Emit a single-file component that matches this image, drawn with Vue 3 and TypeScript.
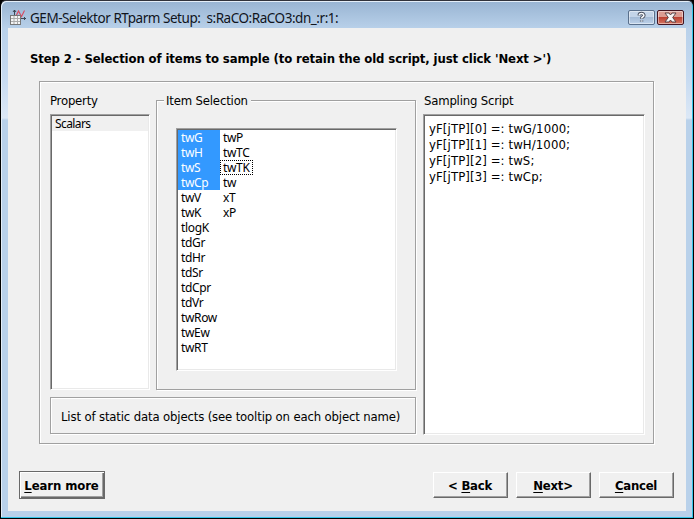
<script setup lang="ts">
import { computed, ref } from 'vue'

interface Item {
  name: string
  selected?: boolean
  focused?: boolean
}

const rowsPerColumn = 15
const properties = ref<string[]>(['Scalars'])
const items = ref<Item[]>([
  { name: 'twG', selected: true },
  { name: 'twH', selected: true },
  { name: 'twS', selected: true },
  { name: 'twCp', selected: true },
  { name: 'twV' },
  { name: 'twK' },
  { name: 'tlogK' },
  { name: 'tdGr' },
  { name: 'tdHr' },
  { name: 'tdSr' },
  { name: 'tdCpr' },
  { name: 'tdVr' },
  { name: 'twRow' },
  { name: 'twEw' },
  { name: 'twRT' },
  { name: 'twP' },
  { name: 'twTC' },
  { name: 'twTK', focused: true },
  { name: 'tw' },
  { name: 'xT' },
  { name: 'xP' },
])
const itemColumns = computed<Item[][]>(() => [
  items.value.slice(0, rowsPerColumn),
  items.value.slice(rowsPerColumn),
])
const script = ref<string[]>([
  'yF[jTP][0] =: twG/1000;',
  'yF[jTP][1] =: twH/1000;',
  'yF[jTP][2] =: twS;',
  'yF[jTP][3] =: twCp;',
])
</script>

<template>
  <div class="window">
    <header class="titlebar">
      <svg class="app-icon" width="17" height="17" viewBox="0 0 17 17">
        <path d="M4.5 1V7M3 3L4.5 1L6 3M11 9.5H16M14 8L15.5 9.5L14 11" fill="none" stroke="#333a46" stroke-width=".9" />
        <path d="M6 7L8.5 2L11.5 7.5L14.5 1.5" fill="none" stroke="#d9485f" stroke-width="1.1" />
        <rect x=".5" y="6.5" width="10" height="9" fill="#f4f4f4" stroke="#777" />
        <path d="M1 9.5H10M1 12.5H10M4 7V15M7.5 7V15" stroke="#aaa" />
      </svg>
      <h1 class="title">GEM-Selektor RTparm Setup:&nbsp; s:RaCO:RaCO3:dn_:r:1:</h1>
      <button class="caption help" aria-label="Help">
        <svg width="27" height="15" viewBox="0 0 27 15">
          <path d="M11.3 5.6V4.6Q11.6 3.4 13.5 3.4T15.9 5.2Q15.9 6.3 14.6 7Q13.6 7.6 13.6 8.8M13.6 10.6V11.6" fill="none" stroke="#4b5261" stroke-width="3.4" />
          <path d="M11.3 5.2V4.6Q11.6 3.4 13.5 3.4T15.9 5.2Q15.9 6.3 14.6 7Q13.6 7.6 13.6 8.5M13.6 10.4V11.6" fill="none" stroke="#f5f7fa" stroke-width="1.5" />
        </svg>
      </button>
      <button class="caption close" aria-label="Close">
        <svg width="27" height="15" viewBox="0 0 27 15">
          <path d="M8 3H12L13.5 5L15 3H19L15.7 7.5L19 12H15L13.5 10L12 12H8L11.3 7.5Z" fill="#f7f5f5" stroke="#5a4548" stroke-width="1" />
        </svg>
      </button>
    </header>

    <main class="client">
      <h2 class="step">Step 2 - Selection of items to sample (to retain the old script, just click 'Next &gt;')</h2>

      <section class="page etched">
        <div class="left">
          <div class="columns">
            <div class="property">
              <div class="label">Property</div>
              <ul class="sunken prop-list">
                <li v-for="p in properties" :key="p" class="ui">{{ p }}</li>
              </ul>
            </div>
            <div class="group etched">
              <div class="legend"><span>Item Selection</span></div>
              <div class="sunken item-list">
                <ul v-for="(column, c) in itemColumns" :key="c" class="item-column">
                  <li v-for="i in column" :key="i.name" class="ui" :class="{ selected: i.selected, focused: i.focused }">{{ i.name }}</li>
                </ul>
              </div>
            </div>
          </div>
          <div class="hint etched">List of static data objects (see tooltip on each object name)</div>
        </div>
        <div class="right">
          <div class="label script-label">Sampling Script</div>
          <div class="sunken script">
            <div v-for="line in script" :key="line">{{ line }}</div>
          </div>
        </div>
      </section>

      <footer class="buttons">
        <button class="btn default"><u>L</u>earn more</button>
        <div class="spacer"></div>
        <button class="btn">&lt; <u>B</u>ack</button>
        <button class="btn"><u>N</u>ext&gt;</button>
        <button class="btn"><u>C</u>ancel</button>
      </footer>
    </main>
  </div>
</template>

<style>
body {
  background: #000;
  overflow: hidden;
}
</style>

<style scoped>
* {
  box-sizing: border-box;
  margin: 0;
  padding: 0;
}
.window {
  width: 694px;
  height: 519px;
  padding: 0 6px 6px;
  border: 1px solid #000;
  border-top: 1px solid #30323a;
  border-radius: 6px 6px 0 0;
  background: linear-gradient(#98b4d2 0, #b9d1ea 28px, #c8dbf1 80px, #dce8f6 117px, #b9d1ea 119px);
  box-shadow: inset -1px -1px #35c5e8, inset 1px 1px #e4eef8;
  font-family: "DejaVu Sans Condensed", "DejaVu Sans", sans-serif;
  font-stretch: condensed;
  font-size: 13px;
  color: #000;
  white-space: nowrap;
}
.titlebar {
  height: 27px;
  display: flex;
  align-items: flex-start;
  padding: 8px 3px 0;
}
.app-icon {
  flex: none;
  margin-left: 0;
}
.title {
  flex: 1;
  margin-left: 3px;
  font: 400 13.5px/18px "Noto Sans", sans-serif;
  letter-spacing: -0.46px;
  color: #10141c;
}
.caption {
  width: 27px;
  height: 15px;
  margin: 1px 0 0 2px;
  border: 1px solid #596f8b;
  border-radius: 2px;
  box-shadow: inset 0 0 0 1px rgba(255, 255, 255, 0.45);
  overflow: hidden;
}
.caption svg {
  display: block;
  margin: -1px;
}
.help {
  background: linear-gradient(#c3d4e8 50%, #a4bbd6 50%, #bdd2ea);
}
.close {
  border-color: #431420;
  background: linear-gradient(#dc9c92 48%, #bd4233 50%, #d37562);
}
.client {
  width: 678px;
  height: 483px;
  margin-left: 1px;
  padding: 22px 12px 12px 11px;
  background: #f0f0f0;
  display: flex;
  flex-direction: column;
}
.step {
  height: 31px;
  padding-left: 11px;
  font-size: 13px;
  line-height: 17px;
  font-weight: 700;
  letter-spacing: -0.115px;
}
.etched {
  border: 1px solid #a0a0a0;
  box-shadow: 1px 1px #fff, inset 1px 1px #fff;
}
.sunken {
  background: #fff;
  border: 1px solid;
  border-color: #a0a0a0 #fff #fff #a0a0a0;
  box-shadow: inset 1px 1px #696969, inset -1px -1px #e9e9e9;
}
ul {
  list-style: none;
}
.page {
  width: 615px;
  height: 364px;
  margin-left: 20px;
  padding: 10px 8px 0 10px;
  display: flex;
  gap: 7px;
}
.left {
  width: 366px;
}
.columns {
  display: flex;
  gap: 6px;
  height: 298px;
}
.property {
  width: 100px;
}
.label {
  height: 22px;
  line-height: 17px;
  letter-spacing: -0.2px;
}
.prop-list {
  height: 276px;
  padding: 1px;
}
.ui {
  height: 15px;
  font: 12px/15px "Noto Sans", sans-serif;
  letter-spacing: -0.35px;
}
.prop-list .ui {
  padding-left: 3px;
  letter-spacing: -0.6px;
  background: #f0f0f0;
}
.group {
  width: 260px;
  height: 290px;
  margin-top: 8px;
  padding-left: 19px;
}
.legend {
  display: flex;
  height: 27px;
  margin-left: -12px;
}
.legend span {
  width: 87px;
  height: 17px;
  margin-top: -9px;
  padding-left: 2px;
  line-height: 17px;
  letter-spacing: -0.17px;
  background: #f0f0f0;
}
.item-list {
  width: 221px;
  height: 243px;
  padding: 1px;
  display: flex;
}
.item-column {
  display: flex;
  flex-direction: column;
  align-items: flex-start;
}
.item-column:first-child {
  width: 42px;
  align-items: stretch;
}
.item-column .ui {
  padding: 0 3px;
}
.selected {
  background: #3399ff;
  color: #fff;
}
.item-column .focused {
  padding-right: 4px;
  outline: 1px dotted #000;
  outline-offset: -1px;
}
.hint {
  height: 37px;
  margin-top: 7px;
  padding-left: 10px;
  line-height: 37px;
  letter-spacing: -0.15px;
}
.right {
  width: 222px;
}
.script-label {
  padding-left: 1px;
}
.script {
  height: 321px;
  padding: 6px 5px;
  line-height: 16px;
  letter-spacing: 0.11px;
}
.buttons {
  display: flex;
  gap: 8px;
  margin-top: 27px;
}
.spacer {
  flex: 1;
}
.btn {
  width: 75px;
  height: 26px;
  margin-top: 1px;
  padding: 2px 1px 0 0;
  border: 1px solid;
  border-color: #fff #696969 #696969 #fff;
  box-shadow: inset -1px -1px #a0a0a0;
  background: #f0f0f0;
  font: 700 13px/16px "DejaVu Sans Condensed", "DejaVu Sans", sans-serif;
  font-stretch: condensed;
  letter-spacing: -0.25px;
  white-space: nowrap;
  color: #000;
}
.default {
  width: 86px;
  height: 28px;
  margin-top: 0;
  letter-spacing: -0.1px;
  border-color: #696969;
  box-shadow: inset 1px 1px #fff, inset -1px -1px #696969, inset -2px -2px #a0a0a0;
}
.btn u {
  text-underline-offset: 2px;
  text-decoration-thickness: 1px;
}
</style>
